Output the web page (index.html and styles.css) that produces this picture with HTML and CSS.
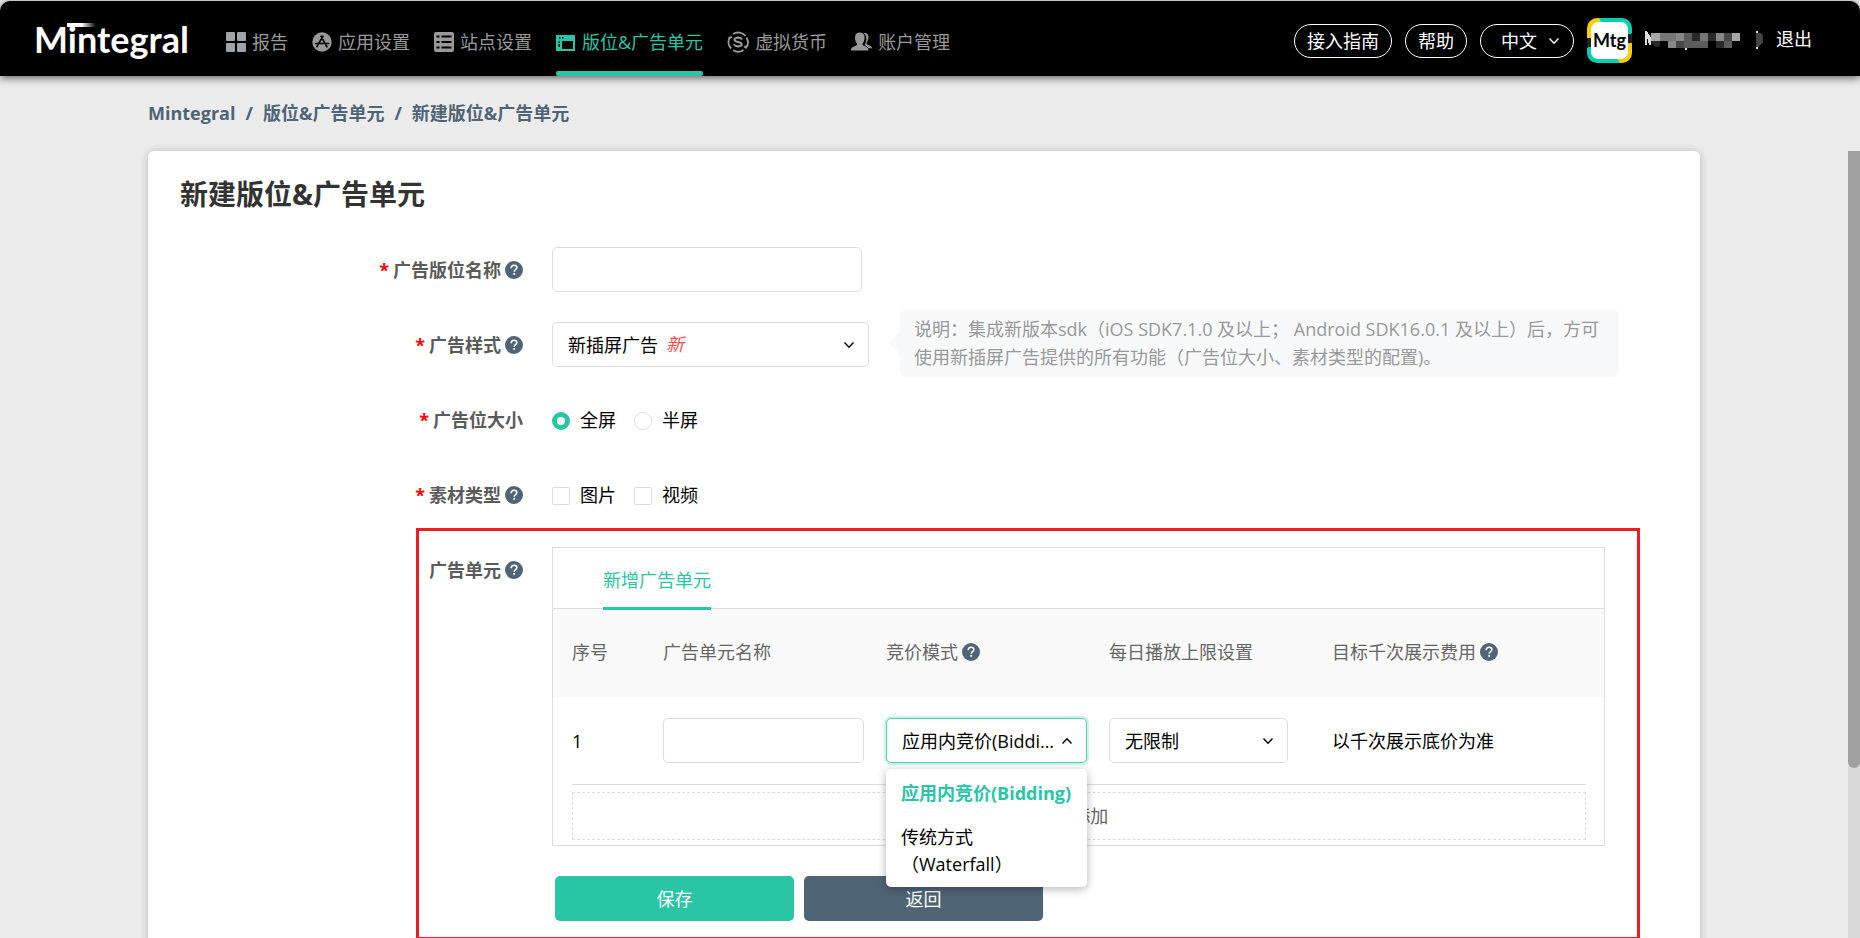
FILE: index.html
```html
<!DOCTYPE html>
<html lang="zh-CN">
<head>
  <meta charset="UTF-8">
  <meta name="viewport" content="width=device-width, initial-scale=1.0">
  <title>新建版位&amp;广告单元 - Mintegral</title>
  <link rel="stylesheet" href="styles.css">
</head>
<body>
  <svg class="sprite" aria-hidden="true">
    <symbol id="icon-help" viewBox="0 0 18 18">
      <circle cx="9" cy="9" r="9" fill="#4f6475"/>
      <path d="M6.200 7.200C6.200 5.300 7.400 4.300 9.100 4.300c1.700 0 2.800.9 2.800 2.300 0 1.900-2.700 2-2.700 4.100" fill="none" stroke="#fff" stroke-width="1.500"/>
      <rect x="8.300" y="12" width="1.800" height="1.800" fill="#fff"/>
    </symbol>
    <symbol id="icon-arrow" viewBox="0 0 12 8">
      <path d="M1.500 1.500 6 6.300l4.500-4.800" fill="none" stroke="currentColor" stroke-width="1.400"/>
    </symbol>
  </svg>

  <header class="topbar">
    <a class="logo" href="#">Mintegral<span class="logo-bar"></span></a>
    <nav class="nav">
      <a class="nav-item" href="#">
        <svg width="20" height="20" viewBox="0 0 20 20" fill="#a0a4a8"><rect width="9" height="9" rx="1"/><rect x="11" width="9" height="9" rx="1"/><rect y="11" width="9" height="9" rx="1"/><rect x="11" y="11" width="9" height="9" rx="1"/></svg>
        报告
      </a>
      <a class="nav-item" href="#">
        <svg width="20" height="20" viewBox="0 0 20 20"><circle cx="10" cy="10" r="9.700" fill="#999"/><path d="M9 4.200 13.200 11.800M11 4.200 6.200 12.400M3.600 11.500h7.400M13 11.500h3.400M4.900 14.600l.7-1.200M14 13.300l.9 1.500" fill="none" stroke="#000" stroke-width="1.700" stroke-linecap="round"/></svg>
        应用设置
      </a>
      <a class="nav-item" href="#">
        <svg width="20" height="20" viewBox="0 0 20 20"><rect width="20" height="20" rx="2" fill="#999"/><path d="M2.500 4.500h3M7.500 4.500h10M2.500 10h3M7.500 10h10M2.500 15.500h3M7.500 15.500h10" stroke="#000" stroke-width="2"/></svg>
        站点设置
      </a>
      <a class="nav-item active" href="#">
        <svg width="20" height="20" viewBox="0 0 20 20"><path d="M0 3h19v16H0z" fill="#29c5a5"/><path d="M6 9h11v8H6zM3 5h1.500v1.500H3zM6 5h1.500v1.500H6zM2.500 9.500h1.500V11H2.500zM2.500 12h1.500v3H2.500z" fill="#000"/></svg>
        版位&amp;广告单元
      </a>
      <a class="nav-item" href="#">
        <svg width="22" height="22" viewBox="0 0 22 22" fill="none" stroke="#999" stroke-width="1.900"><path d="M4 17.500A9.500 9.500 0 0 1 3 6M6 3A9.500 9.500 0 0 1 18.500 5M19.500 6.500a9.500 9.500 0 0 1-1 11M16.500 19A9.500 9.500 0 0 1 6 19.200M1.500 7.200l3.400-1.400M20.500 14.800l-3.400 1.400"/><path d="M15 8.500C14.300 7 13 6.700 11 6.700c-2.300 0-3.600.7-3.600 2 0 3 7.400 1.500 7.400 4.500 0 1.400-1.600 2.100-3.800 2.100-2 0-3.500-.6-4-2.100M11 5.500v2M11 14.500v2"/></svg>
        虚拟货币
      </a>
      <a class="nav-item" href="#">
        <svg width="21" height="20" viewBox="0 0 21 20" fill="#999"><path d="M12.500 1.200c3-1 5 .6 5 4 0 2.500-.8 4-1.800 5.200-.3 1.500.3 2 2.800 3 2 .8 2.500 1.800 2.500 2.800h-3.500c-.8-1.500-2-2.200-4-3 1.200-1.700 1.800-4.200 1.800-6.700 0-2.500-1-4.300-2.800-5.300z"/><path d="M8.800.5c3 0 4.800 1.800 4.800 5 0 3-.9 4.800-2 6-.2 1.500.3 2 3 3 2.400 1 2.900 2.300 2.900 4H0c0-1.700.5-3 3-4 2.800-1 3.300-1.500 3-3-1.100-1.200-2-3-2-6 0-3.200 1.800-5 4.800-5z"/></svg>
        账户管理
      </a>
    </nav>
    <div class="tools">
      <button class="pill" type="button">接入指南</button>
      <button class="pill" type="button">帮助</button>
      <div class="lang">
        <select class="pill" aria-label="语言"><option>中文</option><option>English</option></select>
        <svg class="arrow" width="12" height="8"><use href="#icon-arrow"/></svg>
      </div>
      <div class="avatar"><span>Mtg</span></div>
      <svg class="account" width="118" height="20" viewBox="0 0 118 20" shape-rendering="crispEdges">
        <path d="M0 0h2l4 7v7H4L2 6v8H0z" fill="#ddd"/>
        <path d="M6 2h9v8H6zM87 2h8v8h-8z" fill="#a8a8a8"/>
        <path d="M15 2h16v8H15zM55 2h8v8h-8z" fill="#777"/>
        <path d="M31 2h8v8h-8zM71 2h8v8h-8zM23 10h8v7h-8z" fill="#888"/>
        <path d="M39 2h8v8h-8zM79 10h8v7h-8zM39 10h24v7H39z" fill="#5c5c5c"/>
        <path d="M79 2h8v8h-8zM31 10h8v7h-8z" fill="#484848"/>
        <path d="M47 2h8v8h-8zM63 2h8v8h-8zM6 10h9v5l-4 1-5-4zM71 10h8v7h-8z" fill="#2a2a2a"/>
        <path d="M111 2h4l3 3v6l-3 4-4 2z" fill="#444"/>
        <path d="M111 0h2v2h-2zM111 16h2v2h-2zM40 17h2v2h-2z" fill="#ddd"/>
      </svg>
      <a class="logout" href="#">退出</a>
    </div>
  </header>

  <main class="page">
    <nav class="breadcrumb">
      <a href="#">Mintegral</a><span>/</span><a href="#">版位&amp;广告单元</a><span>/</span><a href="#">新建版位&amp;广告单元</a>
    </nav>

    <form class="card">
      <h1>新建版位&amp;广告单元</h1>

      <div class="form-row">
        <label class="form-label required" for="placement-name">广告版位名称<svg class="help"><use href="#icon-help"/></svg></label>
        <input class="control name-input" id="placement-name" type="text">
      </div>

      <div class="form-row">
        <label class="form-label required" for="ad-format">广告样式<svg class="help"><use href="#icon-help"/></svg></label>
        <div class="select-box format-select">
          <select class="control" id="ad-format"><option>新插屏广告</option></select>
          <em class="new-flag">新</em>
          <svg class="arrow" width="12" height="8"><use href="#icon-arrow"/></svg>
        </div>
        <p class="tip">说明：集成新版本sdk（iOS SDK7.1.0 及以上； Android SDK16.0.1 及以上）后，方可使用新插屏广告提供的所有功能（广告位大小、素材类型的配置)。</p>
      </div>

      <div class="form-row" role="radiogroup" aria-labelledby="size-label">
        <span class="form-label required" id="size-label">广告位大小</span>
        <div class="choices">
          <label><input type="radio" name="size" checked>全屏</label>
          <label><input type="radio" name="size">半屏</label>
        </div>
      </div>

      <div class="form-row" role="group" aria-labelledby="creative-label">
        <span class="form-label required" id="creative-label">素材类型<svg class="help"><use href="#icon-help"/></svg></span>
        <div class="choices">
          <label><input type="checkbox">图片</label>
          <label><input type="checkbox">视频</label>
        </div>
      </div>

      <section class="unit-section">
        <span class="form-label">广告单元<svg class="help"><use href="#icon-help"/></svg></span>
        <div class="unit-body">
          <div class="unit-panel">
            <div class="tabs"><button class="tab" type="button">新增广告单元</button></div>
            <table class="unit-table">
              <thead>
                <tr>
                  <th class="col-no">序号</th>
                  <th class="col-field">广告单元名称</th>
                  <th class="col-field">竞价模式<svg class="help"><use href="#icon-help"/></svg></th>
                  <th class="col-field">每日播放上限设置</th>
                  <th>目标千次展示费用<svg class="help"><use href="#icon-help"/></svg></th>
                </tr>
              </thead>
              <tbody>
                <tr>
                  <td>1</td>
                  <td><input class="control" type="text" aria-label="广告单元名称"></td>
                  <td>
                    <div class="select-box open">
                      <select class="control" aria-label="竞价模式"><option>应用内竞价(Bidding)</option><option>传统方式（Waterfall）</option></select>
                      <svg class="arrow" width="12" height="8"><use href="#icon-arrow"/></svg>
                      <ul class="menu">
                        <li class="selected">应用内竞价(Bidding)</li>
                        <li>传统方式（Waterfall）</li>
                      </ul>
                    </div>
                  </td>
                  <td>
                    <div class="select-box cap-select">
                      <select class="control" aria-label="每日播放上限设置"><option>无限制</option></select>
                      <svg class="arrow" width="12" height="8"><use href="#icon-arrow"/></svg>
                    </div>
                  </td>
                  <td>以千次展示底价为准</td>
                </tr>
              </tbody>
            </table>
            <div class="add-row"><button type="button">＋ 添加</button></div>
          </div>
          <div class="actions">
            <button class="save" type="submit">保存</button>
            <button class="back" type="button">返回</button>
          </div>
        </div>
      </section>
    </form>
  </main>
  <div class="scrollbar"><div class="scroll-thumb"></div></div>
</body>
</html>
```
FILE: styles.css
```css
* {
  box-sizing: border-box;
}
body {
  margin: 0;
  height: 100vh;
  overflow: hidden;
  background: #ebebeb;
  color: #000;
  font: 18px/28px "Open Sans", "Noto Sans CJK SC", sans-serif;
}
a {
  color: inherit;
  text-decoration: none;
}
button, input, select {
  font: inherit;
  color: inherit;
}
button {
  cursor: pointer;
}
.sprite {
  position: absolute;
  width: 0;
  height: 0;
}

/* top bar */
.topbar {
  display: flex;
  align-items: center;
  height: 75px;
  margin-top: 1px;
  padding: 0 48px 0 34px;
  background: #000;
  border-radius: 10px 10px 0 0;
  box-shadow: 0 2px 8px rgba(0, 0, 0, 0.6);
}
.logo {
  position: relative;
  width: 156px;
  margin-right: 36px;
  color: #fff;
  font: bold 36px/40px Lato, sans-serif;
}
.logo-bar {
  position: absolute;
  left: 33px;
  top: 4px;
  width: 29px;
  height: 4px;
  background: linear-gradient(90deg, #fff 50%, #000);
}
.nav {
  display: flex;
  align-self: stretch;
  gap: 24px;
  color: #999;
}
.nav-item {
  display: flex;
  align-items: center;
  gap: 6px;
  padding-top: 12px;
  border-bottom: 5px solid transparent;
  white-space: nowrap;
}
.nav-item.active {
  position: relative;
  color: #29c5a5;
}
.nav-item.active::after {
  content: "";
  position: absolute;
  left: 0;
  right: 0;
  bottom: -5px;
  height: 5px;
  border-radius: 2px;
  background: #29c5a5;
}
.tools {
  display: flex;
  align-items: center;
  gap: 13px;
  margin-left: auto;
  padding-top: 4px;
  color: #fff;
}
.pill {
  height: 34px;
  padding: 0 12px;
  border: 1px solid #fff;
  border-radius: 17px;
  background: #000;
  line-height: 28px;
}
.lang {
  position: relative;
}
.lang .pill {
  width: 94px;
  padding: 0 20px;
  appearance: none;
}
.arrow {
  position: absolute;
  right: 14px;
  top: 50%;
  margin-top: -4px;
  pointer-events: none;
}
.avatar {
  width: 45px;
  height: 45px;
  padding: 4px;
  border-radius: 10px;
  background: conic-gradient(#00d1b2 20%, #231f20 20% 27%, #fc0 27% 43%, #00d1b2 43% 70%, #231f20 70% 77%, #fc0 77% 93%, #00d1b2 93%);
}
.avatar span {
  display: block;
  border-radius: 7px;
  background: #fff;
  color: #000;
  font: bold 18px/37px Lato, sans-serif;
  text-align: center;
}
.logout {
  padding-bottom: 3px;
}

/* page */
.page {
  margin-right: 12px;
  padding: 23px 148px 0;
}
.breadcrumb {
  display: flex;
  gap: 10px;
  margin-bottom: 24px;
  color: #4f6475;
  font-weight: bold;
}
.card {
  padding-bottom: 60px;
  border-radius: 6px;
  background: #fff;
  box-shadow: 0 0 8px rgba(0, 0, 0, 0.2);
}
h1 {
  margin: 0;
  padding: 23px 32px 33px;
  color: #333;
  font-size: 28px;
  line-height: 40px;
}
.form-row {
  display: flex;
  align-items: center;
  height: 45px;
  margin-bottom: 30px;
}
.form-label {
  display: flex;
  align-items: center;
  justify-content: flex-end;
  flex: none;
  width: 375px;
  margin-right: 29px;
  color: #5b5b5b;
  font-weight: bold;
}
.required::before {
  content: "*";
  margin-right: 4px;
  color: #f00;
}
.help {
  width: 18px;
  height: 18px;
  margin-left: 4px;
}
.control {
  display: block;
  width: 100%;
  height: 45px;
  padding: 0 15px;
  border: 1px solid #dcdcdc;
  border-radius: 5px;
  background: #fff;
  appearance: none;
}
.name-input {
  width: 310px;
}
.select-box {
  position: relative;
}
.format-select {
  flex: none;
  width: 317px;
}
.new-flag {
  position: absolute;
  left: 114px;
  top: 8px;
  color: #ff4d4f;
}
.tip {
  position: relative;
  margin: 0 81px 2px 31px;
  padding: 5px 14px 6px;
  border-radius: 5px;
  background: #f7f8fa;
  color: #999;
}
.tip::before {
  content: "";
  position: absolute;
  left: -12px;
  top: 22px;
  border: solid transparent;
  border-width: 11px 12px 11px 0;
  border-right-color: #f7f8fa;
}
.choices, .choices label {
  display: flex;
  align-items: center;
}
.choices {
  gap: 18px;
}
.choices label {
  gap: 10px;
}
.choices input {
  width: 18px;
  height: 18px;
  margin: 2px 0 0;
  border: 1px solid #dcdcdc;
  border-radius: 2px;
  background: #fff;
  appearance: none;
}
.choices input[type="radio"] {
  border-radius: 50%;
}
.choices input:checked {
  border: 5px solid #29c5a5;
}

/* ad units */
.unit-section {
  display: flex;
  margin: -19px 60px 0 268px;
  padding: 16px 32px 16px 0;
  border: 3px solid #ee1c24;
}
.unit-section > .form-label {
  width: 104px;
  height: 45px;
}
.unit-body {
  flex: 1;
}
.unit-panel {
  border: 1px solid #dcdcdc;
}
.tabs {
  display: flex;
  height: 61px;
  padding-left: 50px;
  border-bottom: 1px solid #dcdcdc;
}
.tab {
  height: 62px;
  padding: 4px 0 0;
  border: 0;
  border-bottom: 3px solid #29c5a5;
  background: none;
  color: #29c5a5;
}
.unit-table {
  width: 100%;
  border-collapse: collapse;
  table-layout: fixed;
}
.unit-table th {
  height: 88px;
  padding: 0 22px 2px 0;
  background: #f9f9f9;
  color: #666;
  font-weight: normal;
  text-align: left;
}
.unit-table td {
  height: 87px;
  padding: 0 22px 0 0;
}
.unit-table tr > :first-child {
  padding-left: 19px;
}
.unit-table .col-no {
  width: 110px;
}
.unit-table .col-field {
  width: 223px;
}
th .help {
  vertical-align: -2px;
}
.cap-select {
  width: 179px;
}
.select-box.open .control {
  padding-right: 27px;
  border-color: #4fd1b5;
  box-shadow: 0 0 0 2px #cdf3ea;
  text-overflow: ellipsis;
}
.select-box.open .arrow {
  transform: rotate(180deg);
}
.menu {
  position: absolute;
  left: 0;
  right: 0;
  top: 51px;
  z-index: 1;
  margin: 0;
  padding: 6px 0;
  border-radius: 5px;
  background: #fff;
  box-shadow: 0 2px 10px rgba(0, 0, 0, 0.3);
  list-style: none;
}
.menu li {
  padding: 5px 15px 12px;
  line-height: 27px;
}
.menu li:last-child {
  padding-bottom: 3px;
}
.menu .selected {
  color: #29c5a5;
  font-weight: bold;
}
.add-row {
  margin: 0 18px 5px 19px;
  padding-top: 7px;
  border-top: 1px solid #dcdcdc;
}
.add-row button {
  display: block;
  width: 100%;
  height: 48px;
  border: 1px dashed #dcdcdc;
  background: none;
  color: #666;
}
.actions {
  display: flex;
  gap: 10px;
  margin: 30px 0 0 3px;
}
.actions button {
  width: 239px;
  height: 45px;
  border: 0;
  border-radius: 5px;
  color: #fff;
}
.save {
  background: #29c5a5;
}
.back {
  background: #4f6475;
}
.scrollbar {
  position: fixed;
  top: 151px;
  right: 0;
  bottom: 0;
  width: 12px;
  background: #d9d9d9;
}
.scroll-thumb {
  height: 617px;
  border-radius: 0 0 6px 6px;
  background: #a0a0a0;
}
```
